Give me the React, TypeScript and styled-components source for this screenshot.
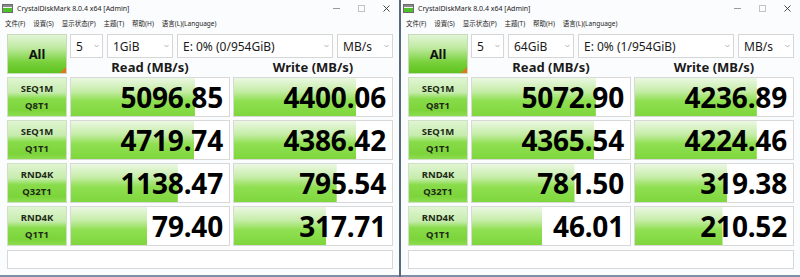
import * as React from 'react';
import styled, { createGlobalStyle } from 'styled-components';

const GlobalStyle = createGlobalStyle`
  html, body {
    margin: 0;
    padding: 0;
  }
  body {
    width: 800px;
    height: 277px;
    overflow: hidden;
    background: #fbfcfd;
    font-family: "Noto Sans", "Noto Sans CJK SC", sans-serif;
    color: #1a1a1a;
  }
`;

const Desktop = styled.div`
  display: flex;
  width: 800px;
  height: 277px;
`;

const Window = styled.div`
  width: 399px;
  height: 277px;
  box-sizing: border-box;
  background: #fbfcfd;
  border-bottom: 2px solid #7d90a7;
  display: flex;
  flex-direction: column;
`;

const Divider = styled.div`
  width: 2px;
  background: #56697e;
`;

const TitleBar = styled.div`
  height: 16px;
  display: flex;
  align-items: center;
  padding-left: 2px;
  font-size: 7px;
  color: #222;
`;

const TitleText = styled.span`
  margin-left: 4px;
`;

const Controls = styled.div`
  margin-left: auto;
  display: flex;
  height: 100%;
`;

const Control = styled.div`
  width: 25px;
  display: flex;
  align-items: center;
  justify-content: center;
`;

const MinLine = styled.div`
  width: 7px;
  height: 1px;
  background: #9a9a9a;
`;

const MaxBox = styled.div`
  width: 5px;
  height: 5px;
  border: 1px solid #c2c2c2;
`;

const MenuBar = styled.div`
  height: 14px;
  display: flex;
  align-items: center;
  gap: 8px;
  padding-left: 5px;
  font-size: 6.5px;
  color: #222;
`;

const Content = styled.div`
  padding: 4px 0 0 7px;
`;

const Board = styled.div`
  display: grid;
  grid-template-columns: 60px 160px 160px;
  grid-template-rows: 24px 13px repeat(4, 40px) 20px;
  gap: 3px;
`;

const AllButton = styled.div`
  grid-row: 1 / span 2;
  position: relative;
  box-sizing: border-box;
  border: 1px solid #c6dcb8;
  background: linear-gradient(180deg, #e2f5d6 0%, #bde99e 35%, #7ad23e 70%, #5fc21e 100%);
  display: flex;
  align-items: center;
  justify-content: center;
  font-size: 13px;
  font-weight: 700;
  color: #111;

  &::after {
    content: '';
    position: absolute;
    right: 0;
    bottom: 0;
    border-style: solid;
    border-width: 0 0 6px 6px;
    border-color: transparent transparent #e2761f transparent;
  }
`;

const Selects = styled.div`
  grid-column: 2 / span 2;
  display: flex;
  gap: 4px;
`;

const Select = styled.div<{ $w: number }>`
  width: ${p => p.$w}px;
  box-sizing: border-box;
  border: 1px solid #d6d6d6;
  background: #fff;
  display: flex;
  align-items: center;
  padding: 0 3px 0 5px;
  font-size: 12px;
  color: #1a1a1a;
`;

const SelectText = styled.span`
  flex: 1;
  white-space: nowrap;
`;

const Chevron = styled.svg`
  width: 5px;
  height: 4px;
  flex: none;
`;

const Header = styled.div`
  font-size: 13px;
  font-weight: 700;
  line-height: 13px;
  text-align: center;
  white-space: nowrap;
`;

const Label = styled.div`
  box-sizing: border-box;
  border: 1px solid #cfe0c6;
  background: linear-gradient(180deg, #e0f5d2 0%, #c6ecad 38%, #88dc4a 55%, #7cd43a 85%, #8cdc50 100%);
  display: flex;
  flex-direction: column;
  align-items: center;
  justify-content: center;
  font-size: 9.5px;
  font-weight: 700;
  line-height: 17px;
  color: #1e2a16;
`;

const Value = styled.div`
  box-sizing: border-box;
  border: 1px solid #d8d8d8;
  background-color: #fff;
  background-image: linear-gradient(180deg, #ebf8e2 0%, #c6eda8 35%, #90e052 60%, #7ed63c 100%);
  background-repeat: no-repeat;
  text-align: right;
  padding: 1px 6px 0 0;
  font-size: 28px;
  font-weight: 700;
  line-height: 37px;
  color: #000;
  letter-spacing: -0.2px;
`;

const Comment = styled.div`
  grid-column: 1 / -1;
  margin-top: 1px;
  box-sizing: border-box;
  border: 1px solid #d8d8d8;
  background: #fff;
`;

interface IRow {
  a: string;
  b: string;
  read: string;
  write: string;
}

interface IBench {
  size: string;
  drive: string;
  rows: IRow[];
}

const benches: IBench[] = [
  {
    size: '1GiB',
    drive: 'E: 0% (0/954GiB)',
    rows: [
      { a: 'SEQ1M', b: 'Q8T1', read: '5096.85', write: '4400.06' },
      { a: 'SEQ1M', b: 'Q1T1', read: '4719.74', write: '4386.42' },
      { a: 'RND4K', b: 'Q32T1', read: '1138.47', write: '795.54' },
      { a: 'RND4K', b: 'Q1T1', read: '79.40', write: '317.71' },
    ],
  },
  {
    size: '64GiB',
    drive: 'E: 0% (1/954GiB)',
    rows: [
      { a: 'SEQ1M', b: 'Q8T1', read: '5072.90', write: '4236.89' },
      { a: 'SEQ1M', b: 'Q1T1', read: '4365.54', write: '4224.46' },
      { a: 'RND4K', b: 'Q32T1', read: '781.50', write: '319.38' },
      { a: 'RND4K', b: 'Q1T1', read: '46.01', write: '210.52' },
    ],
  },
];

const menus = ['文件(F)', '设置(S)', '显示状态(P)', '主题(T)', '帮助(H)', '语言(L)(Language)'];

// CrystalDiskMark meter: log scale, 1 MB/s .. 100000 MB/s
const meter = (v: string) => {
  const n = parseFloat(v);
  const r = Math.log10(n * 10) / 6;
  return `${Math.max(0, Math.min(1, r)) * 100}% 100%`;
};

const AppIcon = () => (
  <svg width="11" height="9" viewBox="0 0 11 9">
    <rect x="0.5" y="0.5" width="10" height="8" fill="#f2f2f2" stroke="#6b6b6b" />
    <rect x="1" y="1" width="9" height="2" fill="#8a8a8a" />
    <rect x="1" y="4" width="9" height="4" fill="#4cbf2a" />
  </svg>
);

const Close = () => (
  <svg width="7" height="7" viewBox="0 0 7 7">
    <path d="M0.5 0.5 L6.5 6.5 M6.5 0.5 L0.5 6.5" stroke="#333" strokeWidth="0.9" />
  </svg>
);

const Drop = ({ w, text }: { w: number; text: string }) => (
  <Select $w={w}>
    <SelectText>{text}</SelectText>
    <Chevron viewBox="0 0 5 4">
      <path d="M0.5 1 L2.5 3 L4.5 1" fill="none" stroke="#a0a0a0" strokeWidth="0.8" />
    </Chevron>
  </Select>
);

const DiskMark = ({ bench }: { bench: IBench }) => (
  <Window>
    <TitleBar>
      <AppIcon />
      <TitleText>CrystalDiskMark 8.0.4 x64 [Admin]</TitleText>
      <Controls>
        <Control><MinLine /></Control>
        <Control><MaxBox /></Control>
        <Control><Close /></Control>
      </Controls>
    </TitleBar>
    <MenuBar>
      {menus.map(m => <span key={m}>{m}</span>)}
    </MenuBar>
    <Content>
      <Board>
        <AllButton>All</AllButton>
        <Selects>
          <Drop w={33} text="5" />
          <Drop w={66} text={bench.size} />
          <Drop w={156} text={bench.drive} />
          <Drop w={56} text="MB/s" />
        </Selects>
        <Header>Read (MB/s)</Header>
        <Header>Write (MB/s)</Header>
        {bench.rows.map((r, i) => (
          <React.Fragment key={i}>
            <Label>
              <span>{r.a}</span>
              <span>{r.b}</span>
            </Label>
            <Value style={{ backgroundSize: meter(r.read) }}>{r.read}</Value>
            <Value style={{ backgroundSize: meter(r.write) }}>{r.write}</Value>
          </React.Fragment>
        ))}
        <Comment />
      </Board>
    </Content>
  </Window>
);

export default function App() {
  return (
    <>
      <GlobalStyle />
      <Desktop>
        <DiskMark bench={benches[0]} />
        <Divider />
        <DiskMark bench={benches[1]} />
      </Desktop>
    </>
  );
}
